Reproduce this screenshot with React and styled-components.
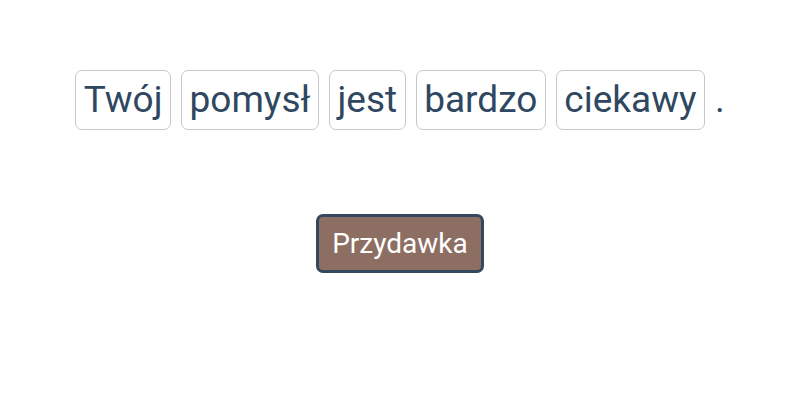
import React from 'react';
import styled, { createGlobalStyle } from 'styled-components';

const GlobalStyle = createGlobalStyle`
  body {
    margin: 0;
    background: #fff;
    font-family: Roboto, "Noto Sans", sans-serif;
  }
`;

const Page = styled.div`
  display: flex;
  flex-direction: column;
  align-items: center;
  padding-top: 70px;
`;

const Sentence = styled.div`
  display: flex;
  align-items: center;
  gap: 10px;
  color: #2f4760;
  font-size: 37px;
`;

const Word = styled.span`
  display: inline-block;
  padding: 8px 7.5px;
  line-height: 42px;
  border: 1px solid #c8c8c8;
  border-radius: 7px;
`;

const Dot = styled.span`
  line-height: 42px;
`;

const RoleButton = styled.button`
  margin-top: 84px;
  height: 59px;
  padding: 0 13px;
  background: #8d6e63;
  color: #fff;
  border: 3px solid #34495e;
  border-radius: 7px;
  font-family: Roboto, sans-serif;
  font-size: 28px;
`;

const words = ['Twój', 'pomysł', 'jest', 'bardzo', 'ciekawy'];

export default function App() {
  return (
    <>
      <GlobalStyle />
      <Page>
        <Sentence>
          {words.map((w) => (
            <Word key={w}>{w}</Word>
          ))}
          <Dot>.</Dot>
        </Sentence>
        <RoleButton>Przydawka</RoleButton>
      </Page>
    </>
  );
}
